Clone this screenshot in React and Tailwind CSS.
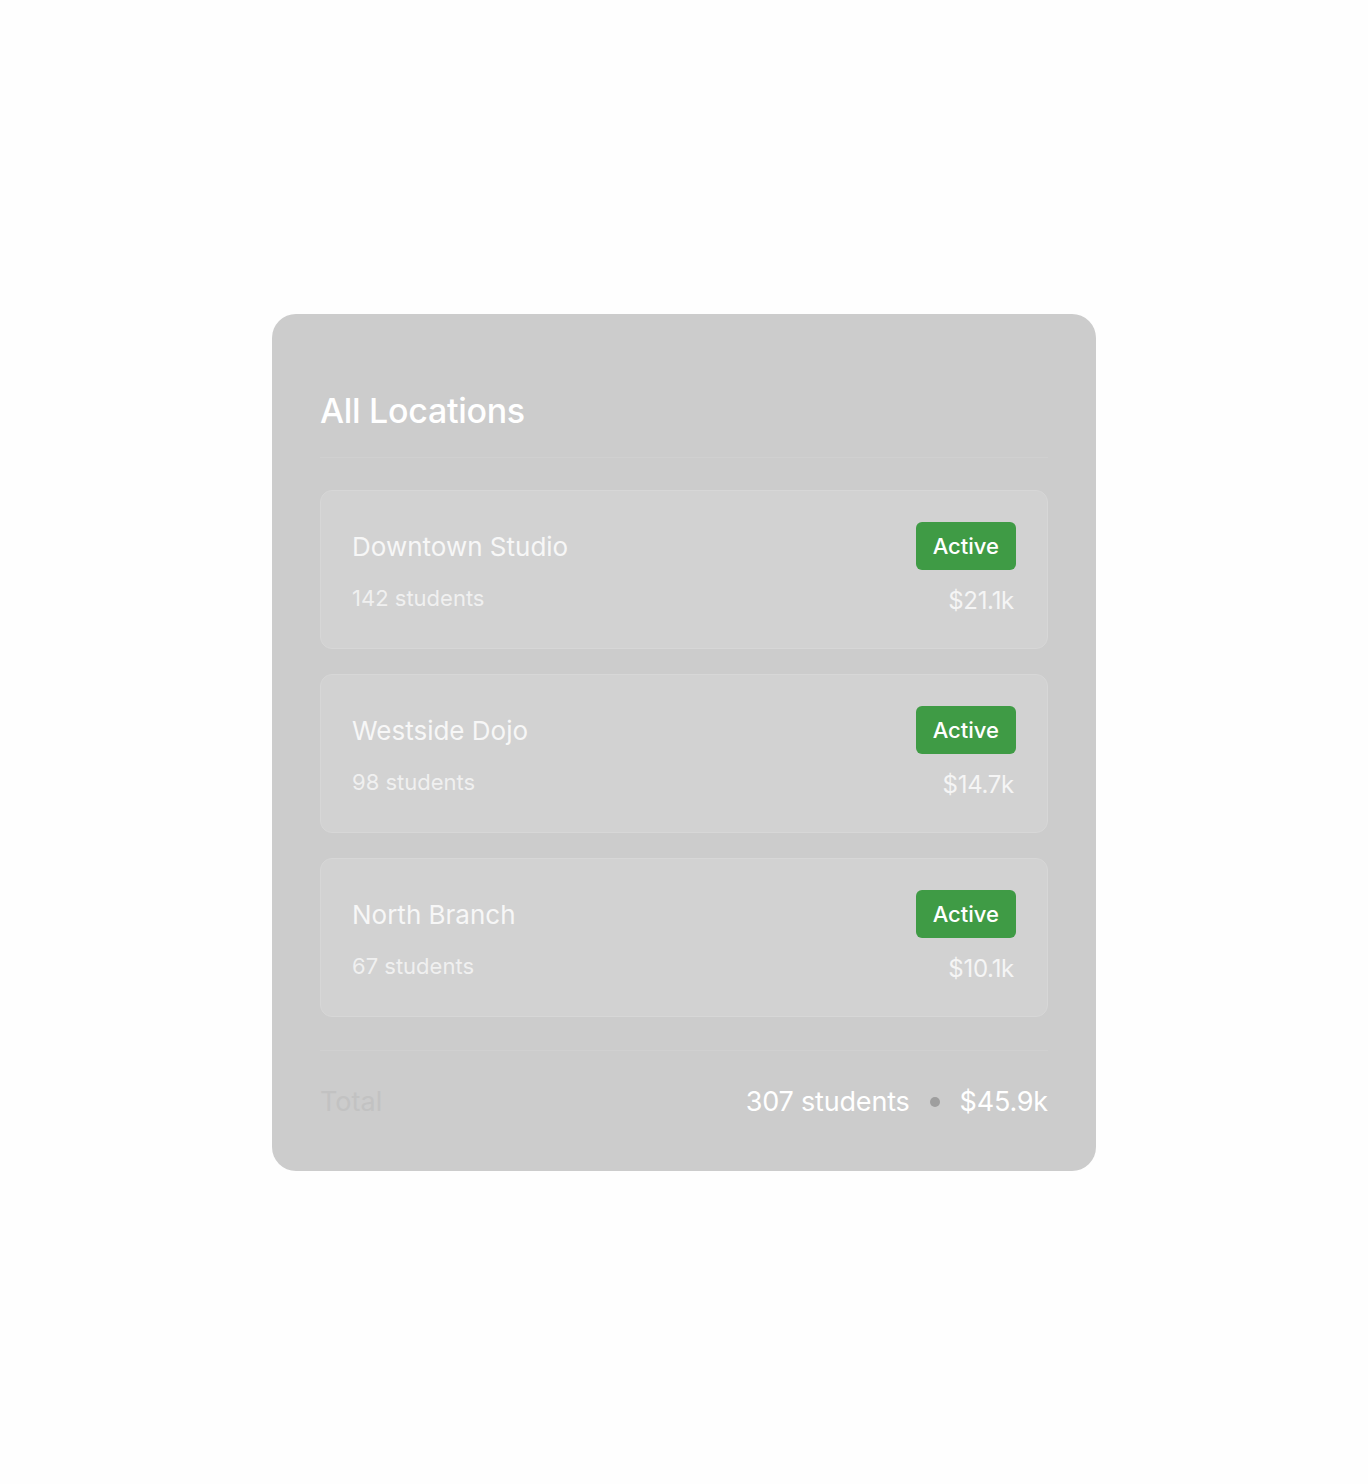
import React from "react";

const locations = [
  { name: "Downtown Studio", students: 142, revenue: "$21.1k" },
  { name: "Westside Dojo", students: 98, revenue: "$14.7k" },
  { name: "North Branch", students: 67, revenue: "$10.1k" },
];

export default function App() {
  return (
    <div
      className="min-h-screen bg-[#fefefe] flex justify-center pt-[314px]"
      style={{ fontFamily: "Inter, 'Noto Sans', sans-serif" }}
    >
      <div className="w-[824px] h-[857px] bg-[#cccccc] rounded-[24px] px-12 pt-[77px]">
        {/* Header */}
        <div className="pb-[26px] border-b border-[#d0d0d0]">
          <h2 className="text-[34px] leading-[40px] font-medium text-white tracking-[-0.3px]">
            All Locations
          </h2>
        </div>

        {/* Location rows */}
        <div className="mt-[32px] flex flex-col gap-[25px]">
          {locations.map((loc) => (
            <div
              key={loc.name}
              className="flex justify-between bg-[#d2d2d2] border border-[#d7d7d7] rounded-[12px] px-[31px] pt-[31px] pb-[32px]"
            >
              <div className="flex flex-col">
                <div className="h-12 flex items-center text-[26px] text-[#f7f7f7]">
                  {loc.name}
                </div>
                <div className="mt-[13px] text-[22px] leading-[30px] text-[#f0f0f0]">
                  {loc.students} students
                </div>
              </div>
              <div className="flex flex-col items-end">
                <span className="h-12 px-[17px] flex items-center rounded-[6px] bg-[#3f9b45] text-white text-[22px] font-medium">
                  Active
                </span>
                <div className="mt-4 mr-[2px] text-[24px] leading-[30px] text-[#f5f5f5] tracking-[-0.3px]">
                  {loc.revenue}
                </div>
              </div>
            </div>
          ))}
        </div>

        {/* Footer */}
        <div className="mt-[33px] border-t border-[#d0d0d0] pt-[33px] flex justify-between items-center">
          <span className="text-[27px] leading-[36px] text-[#c2c2c2]">Total</span>
          <div className="flex items-center gap-[20px] text-[27px] leading-[36px] text-white tracking-[-0.2px]">
            <span>307 students</span>
            <span className="w-[10px] h-[10px] rounded-full bg-[#9e9e9e]"></span>
            <span>$45.9k</span>
          </div>
        </div>
      </div>
    </div>
  );
}
